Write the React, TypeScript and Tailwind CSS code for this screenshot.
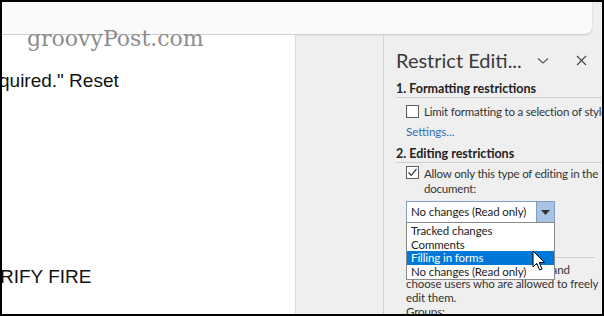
import React from "react";

const ui = { fontFamily: 'Lato, "Noto Sans", sans-serif' };

function Box({ checked }: { checked?: boolean }) {
  return (
    <div className="w-[13px] h-[13px] shrink-0 border border-[#5f5f5f] bg-white flex items-center justify-center">
      {checked && (
        <svg width="11" height="11" viewBox="0 0 11 11">
          <path d="M1.5 5.5 L4.2 8.3 L9.5 1.8" fill="none" stroke="#333" strokeWidth="1.2" />
        </svg>
      )}
    </div>
  );
}

function Cursor() {
  return (
    <svg width="14" height="22" viewBox="0 0 14 22" className="absolute left-[530px] top-[248px]">
      <path
        d="M1 1 L1 17 L4.8 13.4 L7.6 20 L10 19 L7.3 12.5 L12.5 12.5 Z"
        fill="#fff"
        stroke="#000"
        strokeWidth="1"
        strokeLinejoin="round"
      />
    </svg>
  );
}

export default function App() {
  return (
    <div className="relative w-[604px] h-[316px] overflow-hidden border-2 border-black bg-[#efefef] flex flex-col">
      {/* ribbon edge */}
      <div className="h-[32px] shrink-0 flex">
        <div className="w-[590px] h-full bg-[#fafafa] rounded-br-[7px] shadow-[0_1px_2px_rgba(0,0,0,0.18)]" />
      </div>

      <div className="flex flex-1 min-h-0 mt-[1px]">
        {/* document page */}
        <div
          className="w-[294px] shrink-0 bg-white border-r border-[#dcdcdc] overflow-hidden text-[19px] text-[#111] leading-none"
          style={{ fontFamily: '"Liberation Sans", Arial, sans-serif' }}
        >
          <div className="mt-[36px] -ml-[3px]">quired." Reset</div>
          <div className="mt-[177px] -ml-[2px]">RIFY FIRE</div>
        </div>

        <div className="w-[87px] shrink-0" />

        {/* restrict editing pane */}
        <div className="flex-1 border-l border-[#d4d4d4] pl-[12px] text-[#333] whitespace-nowrap" style={ui}>
          <div className="flex items-center mt-[12px] h-[26px]">
            <span className="w-[128px] text-[20px] text-[#3a3a3a]">Restrict Editi...</span>
            <svg width="12" height="8" viewBox="0 0 12 8" className="ml-[13px] mt-[2px]">
              <path d="M1 1.5 L6 6 L11 1.5" fill="none" stroke="#555" strokeWidth="1.1" />
            </svg>
            <svg width="11" height="11" viewBox="0 0 11 11" className="ml-[27px]">
              <path d="M1 1 L10 10 M10 1 L1 10" stroke="#444" strokeWidth="1.1" />
            </svg>
          </div>

          <div className="mt-[8px] pb-[1px] border-b border-[#cfcfcf] mr-[8px] text-[12.5px] font-bold text-[#222] leading-[15px]">
            1. Formatting restrictions
          </div>
          <div className="flex items-center gap-[5px] mt-[6px] ml-[10px] text-[11.5px] tracking-[-0.2px] leading-[15px]">
            <Box />
            <span>Limit formatting to a selection of styles</span>
          </div>
          <div className="mt-[5px] ml-[10px] text-[11.5px] leading-[15px] text-[#2f6db5]">Settings...</div>

          <div className="mt-[7px] pb-[1px] border-b border-[#cfcfcf] mr-[8px] text-[12.5px] font-bold text-[#222] leading-[15px]">
            2. Editing restrictions
          </div>
          <div className="flex items-start gap-[5px] mt-[3px] ml-[10px] text-[11.5px] tracking-[-0.2px] leading-[15px]">
            <Box checked />
            <span>
              Allow only this type of editing in the
              <br />
              document:
            </span>
          </div>

          <div className="relative ml-[10px] mt-[5px] w-[149px] text-[11.5px] tracking-[-0.1px]">
            <div className="flex h-[22px] border border-[#7f9dc6] bg-white">
              <div className="flex-1 pl-[4px] leading-[20px] text-[#222]">No changes (Read only)</div>
              <div className="w-[18px] bg-[#a9c3e4] border-l border-[#7f9dc6] flex items-center justify-center">
                <svg width="9" height="5" viewBox="0 0 9 5">
                  <path d="M0 0 H9 L4.5 5 Z" fill="#333" />
                </svg>
              </div>
            </div>

            {/* text underneath the open list */}
            <div className="mt-[18px] -mr-[40px] pb-[1px] border-b border-[#cfcfcf] text-[12.5px] font-bold leading-[15px] text-[#222]">
              Exceptions (optional)
            </div>
            <div className="mt-[5px] leading-[14px]">
              Select parts of the document and
              <br />
              choose users who are allowed to freely
              <br />
              edit them.
              <br />
              Groups:
            </div>

            {/* open list */}
            <div className="absolute left-0 top-[21px] w-[149px] bg-white border border-[#8a8a8a] leading-[13.5px] text-[#222] py-[1px]">
              <div className="pl-[4px]">Tracked changes</div>
              <div className="pl-[4px]">Comments</div>
              <div className="pl-[4px] bg-[#0078d7] text-white">Filling in forms</div>
              <div className="pl-[4px]">No changes (Read only)</div>
            </div>
          </div>
        </div>
      </div>

      <div
        className="absolute left-[25px] top-[26px] text-[22px] text-[#8c8c8c] leading-none pointer-events-none"
        style={{ fontFamily: '"DejaVu Serif", "Liberation Serif", serif' }}
      >
        groovyPost.com
      </div>

      <Cursor />
    </div>
  );
}
